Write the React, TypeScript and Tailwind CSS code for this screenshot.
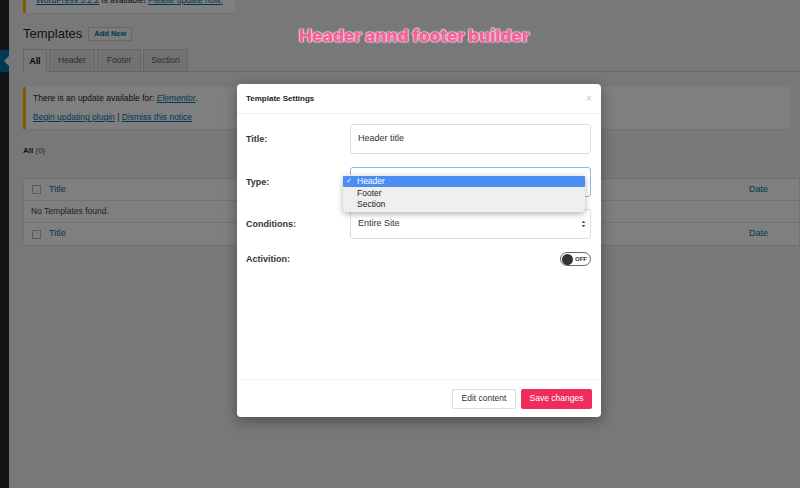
import React from "react";

function Chevrons() {
  return (
    <svg width="5" height="8" viewBox="0 0 5 8" className="shrink-0">
      <path d="M0.5 3 L2.5 0.8 L4.5 3 Z" fill="#555" />
      <path d="M0.5 5 L2.5 7.2 L4.5 5 Z" fill="#555" />
    </svg>
  );
}

function Checkbox() {
  return <span className="inline-block h-[9px] w-[9px] border border-[#b4b9be] bg-white" />;
}

function TableRow() {
  return (
    <div className="flex h-[22px] items-center border-b border-[#e5e5e5] pl-[8px] pr-[31px] text-[9px] last:border-b-0">
      <Checkbox />
      <span className="ml-[8px] text-[#0073aa]">Title</span>
      <span className="ml-auto text-[#0073aa]">Date</span>
    </div>
  );
}

export default function App() {
  const tabs = [
    { label: "All", w: "w-[24px]", active: true },
    { label: "Header", w: "w-[46px]" },
    { label: "Footer", w: "w-[44px]" },
    { label: "Section", w: "w-[45px]" },
  ];

  return (
    <div className="relative flex h-[488px] w-[800px] overflow-hidden bg-[#f1f1f1] font-['Liberation_Sans',Arial,sans-serif] text-[#23282d]">
      {/* admin sidebar */}
      <div className="w-[9px] shrink-0 bg-[#23282d]">
        <div className="h-[50px]" />
        <div className="relative h-[22px] bg-[#0073aa]">
          <span className="absolute right-0 top-[6px] h-0 w-0 border-y-[5px] border-r-[5px] border-y-transparent border-r-[#f1f1f1]" />
        </div>
      </div>

      {/* page content */}
      <div className="flex-1 pl-[14px]">
        <div className="-mt-[12px] flex h-[25px] w-fit items-center border-l-[3px] border-[#ffb900] bg-white pl-[10px] pr-[12px] text-[8.5px] shadow-[0_1px_1px_rgba(0,0,0,0.04)]">
          <span>
            <span className="text-[#0073aa] underline">WordPress 5.2.2</span> is available!{" "}
            <span className="text-[#0073aa] underline">Please update now.</span>
          </span>
        </div>

        <div className="mt-[13px] flex items-center">
          <h1 className="text-[13px] leading-[16px] text-[#23282d]">Templates</h1>
          <span className="ml-[6px] flex h-[14px] items-center border border-[#ccc] bg-[#f7f7f7] px-[5px] text-[7.5px] font-semibold text-[#0073aa]">
            Add New
          </span>
        </div>

        <div className="mt-[8px] flex h-[22px] items-end gap-[2px] border-b border-[#ccc]">
          {tabs.map((t) => (
            <div
              key={t.label}
              className={`${t.w} flex h-[22px] items-center justify-center border border-b-0 border-[#ccc] text-[8.5px] ${
                t.active ? "-mb-px h-[23px] bg-[#f1f1f1] font-bold text-black" : "bg-[#e5e5e5] text-[#555]"
              }`}
            >
              {t.label}
            </div>
          ))}
        </div>

        <div className="mt-[15px] mr-[10px] flex h-[42px] flex-col justify-center gap-[6px] border-l-[3px] border-[#ffb900] bg-white pl-[7px] text-[8.5px] shadow-[0_1px_1px_rgba(0,0,0,0.04)]">
          <div>
            There is an update available for: <span className="italic text-[#0073aa] underline">Elementor</span>.
          </div>
          <div>
            <span className="text-[#0073aa] underline">Begin updating plugin</span> |{" "}
            <span className="text-[#0073aa] underline">Dismiss this notice</span>
          </div>
        </div>

        <div className="mt-[16px] text-[8px]">
          <span className="font-bold">All</span> <span className="text-[#555]">(0)</span>
        </div>

        <div className="mt-[21px] border border-[#e5e5e5] bg-white">
          <TableRow />
          <div className="flex h-[22px] items-center border-b border-[#e5e5e5] pl-[7px] text-[8.5px] text-[#444]">
            No Templates found.
          </div>
          <TableRow />
        </div>
      </div>

      {/* dim overlay */}
      <div className="absolute inset-0 bg-black/50" />

      <div className="absolute left-[299px] top-[23px] font-['Inter',sans-serif] text-[17.5px] font-black tracking-[-0.2px] text-[#f2649a] [text-shadow:0_0_1px_#fff,0_0_1px_#fff,0_0_2px_#fff]">
        Header annd footer builder
      </div>

      {/* modal */}
      <div className="absolute left-[237px] top-[84px] flex h-[333px] w-[364px] flex-col rounded-[4px] bg-white font-['Liberation_Sans',Arial,sans-serif] text-[#23282d] shadow-[0_4px_14px_rgba(0,0,0,0.35)]">
        <div className="flex h-[30px] items-center justify-between border-b border-[#eee] px-[9px]">
          <span className="text-[8px] font-semibold text-[#222]">Template Settings</span>
          <span className="text-[11px] leading-none text-[#c8c8c8]">×</span>
        </div>

        <div className="flex flex-1 flex-col pl-[9px] pr-[10px] pt-[10px]">
          <div className="flex items-center">
            <label className="w-[104px] pt-[2px] text-[9px] font-bold text-[#333]">Title:</label>
            <div className="flex h-[30px] flex-1 items-center rounded-[3px] border border-[#ddd] px-[7px] text-[9px] text-[#333]">
              Header title
            </div>
          </div>

          <div className="mt-[13px] flex items-center">
            <label className="w-[104px] pt-[2px] text-[9px] font-bold text-[#333]">Type:</label>
            <div className="flex h-[30px] flex-1 items-center justify-between rounded-[3px] border border-[#8cb9ec] px-[4px] text-[9px] text-[#333]">
              <span className="pl-[3px]">Header</span>
              <Chevrons />
            </div>
          </div>

          <div className="mt-[12px] flex items-center">
            <label className="w-[104px] pt-[2px] text-[9px] font-bold text-[#333]">Conditions:</label>
            <div className="flex h-[30px] flex-1 items-center justify-between rounded-[3px] border border-[#ddd] px-[4px] text-[9px] text-[#333]">
              <span className="pl-[3px]">Entire Site</span>
              <Chevrons />
            </div>
          </div>

          <div className="mt-[13px] flex items-center">
            <label className="w-[104px] pt-[1px] text-[9px] font-bold text-[#333]">Activition:</label>
            <div className="ml-auto flex h-[14px] w-[31px] items-center rounded-full border border-[#666] bg-white px-[1px]">
              <span className="h-[11px] w-[11px] rounded-full bg-[#333]" />
              <span className="ml-[2px] text-[6px] font-bold text-[#333]">OFF</span>
            </div>
          </div>
        </div>

        <div className="flex h-[38px] items-center justify-end gap-[5px] border-t border-[#f3f3f3] pr-[9px]">
          <span className="flex h-[20px] w-[64px] items-center justify-center rounded-[2px] border border-[#ddd] bg-white text-[8.5px] text-[#333]">
            Edit content
          </span>
          <span className="flex h-[20px] w-[71px] items-center justify-center rounded-[2px] bg-[#ef2c5c] text-[8.5px] text-white">
            Save changes
          </span>
        </div>

        {/* open select list */}
        <div className="absolute left-[106px] top-[91px] w-[242px] rounded-[4px] bg-[#efefef] pb-[2px] pt-[1px] font-['Liberation_Sans',Arial,sans-serif] text-[8.5px] text-[#222] shadow-[0_2px_6px_rgba(0,0,0,0.3)]">
          <div className="flex h-[11px] items-center bg-[#4a8ef4] text-white">
            <span className="w-[14px] pl-[3px] text-[7px]">✓</span>
            <span>Header</span>
          </div>
          <div className="flex h-[12px] items-center">
            <span className="w-[14px]" />
            <span>Footer</span>
          </div>
          <div className="flex h-[11px] items-center">
            <span className="w-[14px]" />
            <span>Section</span>
          </div>
        </div>
      </div>
    </div>
  );
}
